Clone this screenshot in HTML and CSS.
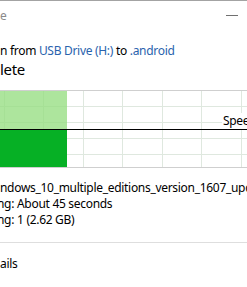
FILE: index.html
```html
<!DOCTYPE html>
<html lang="en">
<head>
    <meta charset="UTF-8">
    <title>Copy progress</title>
    <link rel="stylesheet" href="styles.css">
</head>
<body>
    <div class="window">
        <div class="titlebar">
            <span class="title">e</span>
            <span class="minimize"></span>
        </div>

        <div class="header">
            <p class="route">n from <span class="link">USB Drive (H:)</span> to <span class="link">.android</span></p>
            <p class="status">lete</p>
        </div>

        <div class="chart">
            <div class="speed-area">
                <div class="fill-light"></div>
                <span class="speed-label">Speed</span>
            </div>
            <div class="progress-area">
                <div class="fill-dark"></div>
            </div>
        </div>

        <div class="info">
            <p>ndows_10_multiple_editions_version_1607_updated_jul_2016</p>
            <p><span class="key">ng:</span>About 45 seconds</p>
            <p><span class="key">ng:</span>1 (2.62 GB)</p>
        </div>

        <div class="footer">
            <p>ails</p>
        </div>
    </div>
</body>
</html>
```

FILE: styles.css
```css
body {
    margin: 0;
    background-color: #ffffff;
    font-family: "Noto Sans", "Open Sans", sans-serif;
    font-size: 12px;
    letter-spacing: -0.3px;
    color: #000000;
    overflow: hidden;
}

p {
    margin: 0;
    white-space: nowrap;
}

.window {
    width: 247px;
    height: 287px;
    border-top: 1px solid #a3a3a3;
    box-sizing: border-box;
    overflow: hidden;
}

.titlebar {
    height: 30px;
    display: flex;
    align-items: center;
    justify-content: space-between;
    padding-right: 9px;
}

.title {
    color: #8a8a8a;
    font-size: 12px;
    line-height: 16px;
}

.minimize {
    width: 12px;
    height: 1px;
    margin-top: -2px;
    background-color: #707070;
}

.header {
    margin-top: 12px;
}

.route {
    line-height: 16px;
}

.link {
    color: #2a63ad;
}

.status {
    font-size: 15px;
    line-height: 20px;
}

.chart {
    margin-top: 11px;
    border-top: 1px solid #cfcfcf;
    border-bottom: 1px solid #cfcfcf;
    background-image:
        repeating-linear-gradient(to right, #dfe8df 0 1px, transparent 1px 39.5px),
        repeating-linear-gradient(to bottom, transparent 0 15px, #dfe8df 15px 16px, transparent 16px 15.5px);
    background-position: 4px 0, 0 0;
}

.speed-area {
    position: relative;
    height: 38px;
}

.fill-light {
    width: 67px;
    height: 100%;
    background-color: rgba(150, 222, 130, 0.78);
}

.speed-label {
    position: absolute;
    left: 222px;
    top: 22px;
    padding-left: 1px;
    line-height: 16px;
    background-color: #ffffff;
}

.progress-area {
    height: 37px;
    border-top: 1px solid #000000;
}

.fill-dark {
    width: 67px;
    height: 100%;
    background-color: #06b025;
}

.info {
    margin-top: 12px;
    line-height: 16px;
}

.key {
    display: inline-block;
    width: 20px;
    margin-left: -3px;
}

.footer {
    margin-top: 14px;
    border-top: 1px solid #dedede;
    border-bottom: 1px solid #a8a8a8;
    padding: 13px 0 19px;
    line-height: 16px;
}
```
